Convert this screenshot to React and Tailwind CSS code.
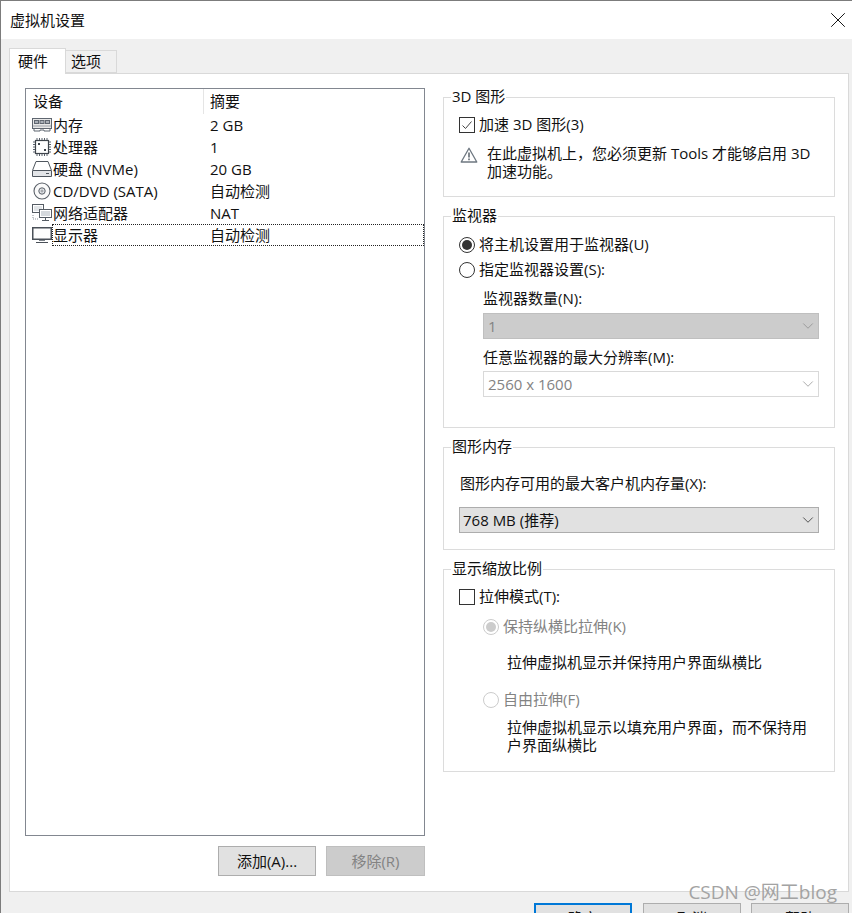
import { ChevronDown, X } from "lucide-react";

const FONT = "font-['Open_Sans','Noto_Sans_CJK_SC',sans-serif]";

function MemoryIcon() {
  return (
    <svg width="20" height="14" viewBox="0 0 20 14" fill="none">
      <rect x="0.5" y="0.5" width="19" height="10" fill="#e8e8e8" stroke="#5f6670" />
      <rect x="2.5" y="2.5" width="4" height="3" fill="#aab0b8" stroke="#5f6670" />
      <rect x="8" y="2.5" width="4" height="3" fill="#aab0b8" stroke="#5f6670" />
      <rect x="13.5" y="2.5" width="4" height="3" fill="#aab0b8" stroke="#5f6670" />
      <path d="M1 8h18" stroke="#9aa0a8" />
      <path d="M2 11v2h6v-1h4v1h6v-2" stroke="#5f6670" />
    </svg>
  );
}

function CpuIcon() {
  return (
    <svg width="20" height="20" viewBox="0 0 20 20" fill="none">
      <rect x="3.5" y="3.5" width="13" height="13" fill="#fff" stroke="#3f454c" strokeWidth="1.2" />
      <path d="M5 1v2M7.5 1v2M10 1v2M12.5 1v2M15 1v2M5 17v2M7.5 17v2M10 17v2M12.5 17v2M15 17v2M1 5h2M1 7.5h2M1 10h2M1 12.5h2M1 15h2M17 5h2M17 7.5h2M17 10h2M17 12.5h2M17 15h2" stroke="#59606a" />
      <rect x="6" y="6" width="2" height="2" fill="#3f454c" />
      <rect x="12" y="12" width="2" height="2" fill="#3f454c" />
    </svg>
  );
}

function DiskIcon() {
  return (
    <svg width="20" height="16" viewBox="0 0 20 16" fill="none">
      <path d="M4 0.5h12l3.5 9v6h-19v-6z" fill="#fff" stroke="#4f565e" />
      <path d="M1 9.5h18" stroke="#4f565e" />
      <rect x="1" y="10" width="18" height="5" fill="#e3e5e8" />
      <path d="M14 12.5h3" stroke="#4f565e" />
    </svg>
  );
}

function DiscIcon() {
  return (
    <svg width="18" height="18" viewBox="0 0 18 18" fill="none">
      <circle cx="9" cy="9" r="8" fill="#fafafa" stroke="#5a6068" strokeWidth="1.1" />
      <circle cx="9" cy="9" r="3.2" fill="#e3e5e8" stroke="#5a6068" />
      <circle cx="9" cy="9" r="1" fill="#fff" stroke="#5a6068" strokeWidth="0.6" />
    </svg>
  );
}

function NetworkIcon() {
  return (
    <svg width="20" height="18" viewBox="0 0 20 18" fill="none">
      <rect x="0.5" y="0.5" width="11" height="8" fill="#fff" stroke="#555c64" />
      <rect x="2" y="2" width="8" height="5" fill="#e2e5e8" />
      <rect x="7.5" y="5.5" width="12" height="8" fill="#fff" stroke="#555c64" />
      <rect x="9" y="7" width="9" height="5" fill="#d5d9dd" />
      <path d="M13.5 14v2M10 16.5h7" stroke="#555c64" />
      <path d="M1 11v4h5" stroke="#8b9197" strokeDasharray="1 1" />
    </svg>
  );
}

function MonitorIcon() {
  return (
    <svg width="20" height="16" viewBox="0 0 20 16" fill="none">
      <rect x="0.75" y="0.75" width="18.5" height="11.5" fill="#fdfdfd" stroke="#4a5058" strokeWidth="1.5" />
      <path d="M7 13.5h6" stroke="#7d838a" />
      <path d="M4 15.5h12" stroke="#4a5058" />
    </svg>
  );
}

function WarningIcon() {
  return (
    <svg width="18" height="16" viewBox="0 0 18 16" fill="none">
      <path d="M9 1.2 16.8 15H1.2z" fill="#fff" stroke="#6d7780" strokeWidth="1.3" strokeLinejoin="round" />
      <path d="M9 5.5v5" stroke="#59626b" strokeWidth="1.5" />
      <path d="M9 11.5v1.8" stroke="#59626b" strokeWidth="1.5" />
    </svg>
  );
}

function Checkbox({ checked }) {
  return (
    <span className="w-4 h-4 shrink-0 border border-[#333333] bg-white flex items-center justify-center">
      {checked && (
        <svg width="14" height="14" viewBox="0 0 14 14" fill="none">
          <path d="M2.5 7.5 5.5 10.5 11.5 3.5" stroke="#444444" strokeWidth="1" />
        </svg>
      )}
    </span>
  );
}

function Radio({ checked, disabled }) {
  return (
    <span className={`w-4 h-4 shrink-0 rounded-full border flex items-center justify-center ${disabled ? "border-[#cccccc]" : "border-[#333333]"}`}>
      {checked && <span className={`w-2.5 h-2.5 rounded-full ${disabled ? "bg-[#cccccc]" : "bg-[#333333]"}`} />}
    </span>
  );
}

function GroupBox({ title, className, children }) {
  return (
    <div className={`relative border border-[#dcdcdc] ${className}`}>
      <span className="absolute -top-[12px] left-[7px] bg-white px-px leading-[20px]">{title}</span>
      {children}
    </div>
  );
}

function Select({ value, className }) {
  return (
    <div className={`h-[26px] border flex items-center justify-between pr-px ${className}`}>
      <span>{value}</span>
      <ChevronDown size={18} strokeWidth={0.9} />
    </div>
  );
}

const DEVICES = [
  { icon: <MemoryIcon />, name: "内存", summary: "2 GB" },
  { icon: <CpuIcon />, name: "处理器", summary: "1" },
  { icon: <DiskIcon />, name: "硬盘 (NVMe)", summary: "20 GB" },
  { icon: <DiscIcon />, name: "CD/DVD (SATA)", summary: "自动检测" },
  { icon: <NetworkIcon />, name: "网络适配器", summary: "NAT" },
  { icon: <MonitorIcon />, name: "显示器", summary: "自动检测", selected: true },
];

function DeviceList() {
  return (
    <div className="w-[400px] h-[748px] border border-[#828790] bg-white">
      <div className="h-[25px] flex items-center">
        <span className="w-[177px] pl-[7px]">设备</span>
        <span className="h-full border-l border-[#e5e5e5] pl-[6px] leading-[25px]">摘要</span>
      </div>
      {DEVICES.map((d) => (
        <div key={d.name} className="h-[22px] flex items-center pl-[5px]">
          <span className="w-[21px] shrink-0 flex justify-center">{d.icon}</span>
          <div className={`flex-1 h-full flex items-center border ${d.selected ? "border-dotted border-[#222222]" : "border-transparent"}`}>
            <span className="w-[157px]">{d.name}</span>
            <span>{d.summary}</span>
          </div>
        </div>
      ))}
    </div>
  );
}

function Button({ children, className }) {
  return (
    <div className={`h-[30px] border flex items-center justify-center ${className}`}>{children}</div>
  );
}

export default function App() {
  return (
    <div className={`${FONT} relative w-[852px] h-[913px] overflow-hidden bg-[#f0f0f0] border-t border-l border-[#7c7c7c] text-[15px] leading-[19px] text-[#111111]`}>
      {/* Title bar */}
      <div className="h-[38px] bg-white flex items-center justify-between pl-[9px] pr-px">
        <span>虚拟机设置</span>
        <X size={26} strokeWidth={0.9} />
      </div>

      <div className="pl-2 pr-[3px] pt-[9px]">
        {/* Tabs */}
        <div className="h-[25px] flex items-end">
          <div className="relative z-10 w-[57px] h-[26px] -mb-px pl-2 bg-white border border-b-0 border-[#d9d9d9] flex items-center">硬件</div>
          <div className="w-[51px] h-[23px] pl-[5px] bg-[#f0f0f0] border border-l-0 border-[#d9d9d9] flex items-center">选项</div>
        </div>

        {/* Tab panel */}
        <div className="h-[819px] bg-white border border-[#d9d9d9] flex pl-[15px] pt-[14px]">
          <div className="w-[400px] flex flex-col">
            <DeviceList />
            <div className="flex justify-end gap-[10px] mt-[10px]">
              <Button className="w-[98px] bg-[#e1e1e1] border-[#adadad]">添加(A)...</Button>
              <Button className="w-[99px] bg-[#cccccc] border-[#bfbfbf] text-[#838383]">移除(R)</Button>
            </div>
          </div>

          <div className="w-[392px] ml-[18px] pt-[9px] flex flex-col gap-[19px]">
            <GroupBox title="3D 图形" className="h-[100px] pl-[15px] pt-[17px]">
              <div className="flex items-center gap-1">
                <Checkbox checked />
                <span>加速 3D 图形(3)</span>
              </div>
              <div className="flex mt-[10px]">
                <span className="w-7 pl-px pt-[3px] shrink-0"><WarningIcon /></span>
                <p className="w-[340px] leading-[18px]">在此虚拟机上，您必须更新 Tools 才能够启用 3D 加速功能。</p>
              </div>
            </GroupBox>

            <GroupBox title="监视器" className="h-[212px] pl-[15px] pt-[18px]">
              <div className="flex items-center gap-1">
                <Radio checked />
                <span>将主机设置用于监视器(U)</span>
              </div>
              <div className="flex items-center gap-1 mt-[6px]">
                <Radio />
                <span>指定监视器设置(S):</span>
              </div>
              <div className="pl-6 pt-[10px]">
                <div>监视器数量(N):</div>
                <Select value="1" className="w-[336px] mt-[5px] pl-1 bg-[#cccccc] border-[#bfbfbf] text-[#838383]" />
                <div className="mt-[9px]">任意监视器的最大分辨率(M):</div>
                <Select value="2560 x 1600" className="w-[336px] mt-1 pl-1 bg-white border-[#d9d9d9] text-[#838383]" />
              </div>
            </GroupBox>

            <GroupBox title="图形内存" className="h-[103px] pl-[15px] pt-[26px]">
              <div className="pl-px">图形内存可用的最大客户机内存量(X):</div>
              <Select value="768 MB (推荐)" className="w-[360px] mt-[14px] pl-[3px] bg-[#e1e1e1] border-[#adadad]" />
            </GroupBox>

            <GroupBox title="显示缩放比例" className="h-[203px] pl-[15px] pt-[17px]">
              <div className="flex items-center gap-1">
                <Checkbox />
                <span>拉伸模式(T):</span>
              </div>
              <div className="pl-6 pt-[11px]">
                <div className="flex items-center gap-1 text-[#838383]">
                  <Radio checked disabled />
                  <span>保持纵横比拉伸(K)</span>
                </div>
                <p className="ml-6 mt-[17px]">拉伸虚拟机显示并保持用户界面纵横比</p>
                <div className="flex items-center gap-1 mt-[18px] text-[#838383]">
                  <Radio disabled />
                  <span>自由拉伸(F)</span>
                </div>
                <p className="ml-6 mt-[9px] w-[310px] leading-[18px]">拉伸虚拟机显示以填充用户界面，而不保持用户界面纵横比</p>
              </div>
            </GroupBox>
          </div>
        </div>

        {/* Dialog buttons */}
        <div className="flex justify-end gap-[10px] mt-[11px]">
          <Button className="w-[98px] mr-px border-2 border-[#0078d7] bg-[#e1e1e1]">确定</Button>
          <Button className="w-[98px] bg-[#e1e1e1] border-[#adadad]">取消</Button>
          <Button className="w-[98px] bg-[#e1e1e1] border-[#adadad]">帮助</Button>
        </div>
      </div>

      {/* CSDN watermark */}
      <span className="absolute right-[15px] top-[879px] text-[19px] leading-[24px] text-[#a3a3a3]">CSDN @网工blog</span>
    </div>
  );
}
